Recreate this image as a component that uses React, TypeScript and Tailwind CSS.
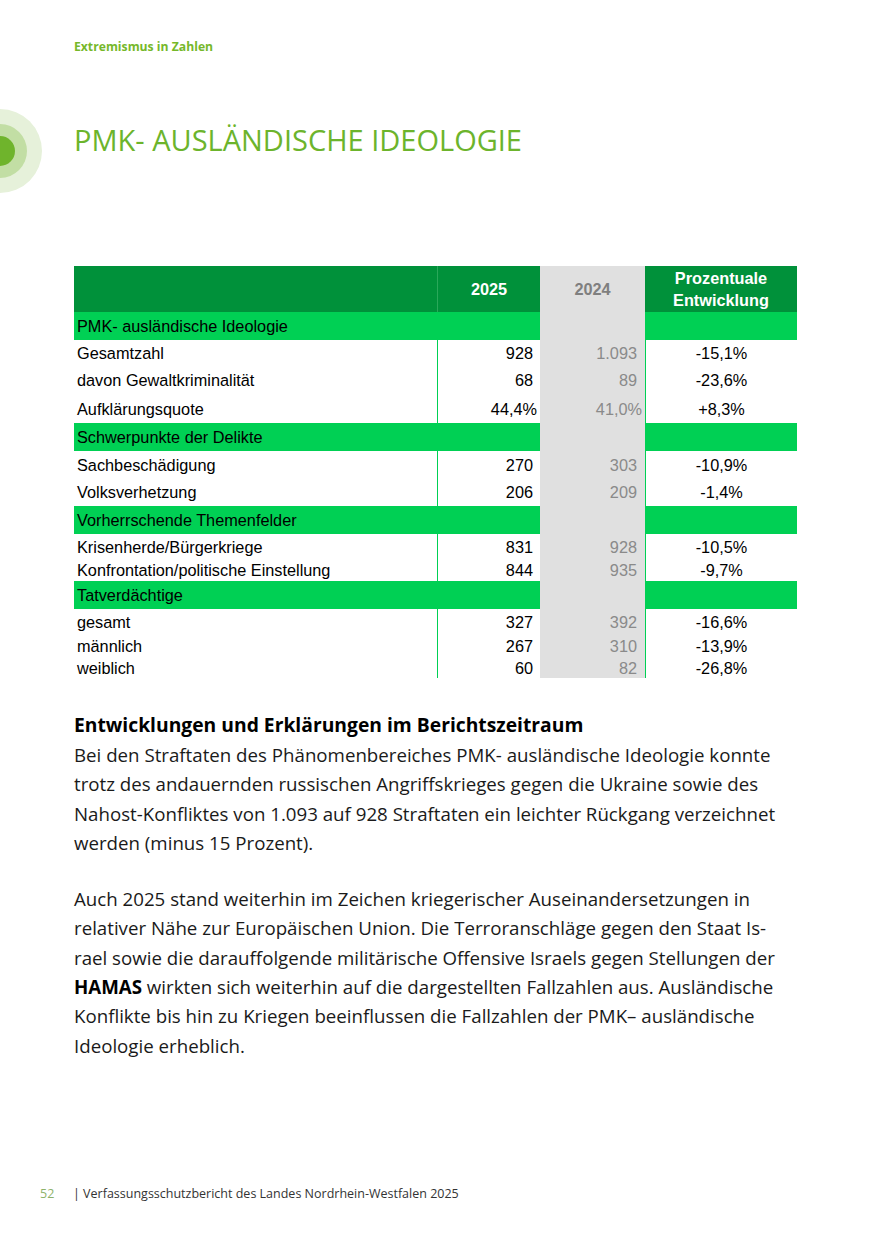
import React from 'react';

type Row =
  | { kind: 'section'; label: string }
  | { kind: 'data'; label: string; y25: string; y24: string; change: string; h: number; pct?: boolean };

const rows: Row[] = [
  { kind: 'section', label: 'PMK- ausländische Ideologie' },
  { kind: 'data', label: 'Gesamtzahl', y25: '928', y24: '1.093', change: '-15,1%', h: 26 },
  { kind: 'data', label: 'davon Gewaltkriminalität', y25: '68', y24: '89', change: '-23,6%', h: 28 },
  { kind: 'data', label: 'Aufklärungsquote', y25: '44,4%', y24: '41,0%', change: '+8,3%', h: 29, pct: true },
  { kind: 'section', label: 'Schwerpunkte der Delikte' },
  { kind: 'data', label: 'Sachbeschädigung', y25: '270', y24: '303', change: '-10,9%', h: 27 },
  { kind: 'data', label: 'Volksverhetzung', y25: '206', y24: '209', change: '-1,4%', h: 28 },
  { kind: 'section', label: 'Vorherrschende Themenfelder' },
  { kind: 'data', label: 'Krisenherde/Bürgerkriege', y25: '831', y24: '928', change: '-10,5%', h: 25 },
  { kind: 'data', label: 'Konfrontation/politische Einstellung', y25: '844', y24: '935', change: '-9,7%', h: 22 },
  { kind: 'section', label: 'Tatverdächtige' },
  { kind: 'data', label: 'gesamt', y25: '327', y24: '392', change: '-16,6%', h: 26 },
  { kind: 'data', label: 'männlich', y25: '267', y24: '310', change: '-13,9%', h: 22 },
  { kind: 'data', label: 'weiblich', y25: '60', y24: '82', change: '-26,8%', h: 21 },
];

const StatsTable: React.FC = () => (
  <div className="w-[723px] font-['Liberation_Sans',Arial,sans-serif] text-[16.3px] leading-[20px] text-black">
    <div className="grid grid-cols-[363px_103px_105px_152px] h-[46px]">
      <div className="bg-[#00913a]" />
      <div className="bg-[#00913a] border-l border-[#2aa85a] flex items-center justify-center font-bold text-white">2025</div>
      <div className="bg-[#e0e0e0] flex items-center justify-center font-bold text-[#7f7f7f]">2024</div>
      <div className="bg-[#00913a] flex items-center justify-center text-center font-bold text-white leading-[22px]">
        Prozentuale
        <br />
        Entwicklung
      </div>
    </div>
    {rows.map((row, i) =>
      row.kind === 'section' ? (
        <div key={i} className="grid grid-cols-[466px_105px_152px] h-[28px]">
          <div className="bg-[#00d054] flex items-center pl-[3px]">{row.label}</div>
          <div className="bg-[#e0e0e0]" />
          <div className="bg-[#00d054]" />
        </div>
      ) : (
        <div key={i} className="grid grid-cols-[363px_103px_105px_152px]" style={{ height: row.h }}>
          <div className="flex items-center pl-[3px]">{row.label}</div>
          <div className={`border-l border-[#00d054] flex items-center justify-end ${row.pct ? 'pr-[3px]' : 'pr-[7px]'}`}>{row.y25}</div>
          <div className={`bg-[#e0e0e0] flex items-center justify-end text-[#8a8a8a] ${row.pct ? 'pr-[3px]' : 'pr-[8px]'}`}>{row.y24}</div>
          <div className="border-l border-[#00d054] flex items-center justify-center">{row.change}</div>
        </div>
      )
    )}
  </div>
);

export default function App() {
  return (
    <div className="w-[875px] h-[1241px] bg-white font-['Open_Sans',sans-serif] text-[#1a1a1a] flex flex-col">
      <div className="pl-[74px] pt-[38px] text-[12.2px] font-bold text-[#76b82a] leading-[18px]">Extremismus in Zahlen</div>

      <div className="flex items-start mt-[52px]">
        <svg width="42" height="86" viewBox="0 0 42 86" className="shrink-0">
          <circle cx="0" cy="43" r="42" fill="#e6f1da" />
          <circle cx="0" cy="43" r="27" fill="#c2dea4" />
          <circle cx="0" cy="43" r="15" fill="#6fb42c" />
        </svg>
        <h1 className="ml-[32px] mt-[13px] text-[29px] leading-[38px] text-[#6cb42c] font-normal">
          PMK- AUSLÄNDISCHE IDEOLOGIE
        </h1>
      </div>

      <div className="pl-[74px] mt-[72px]">
        <StatsTable />
      </div>

      <div className="pl-[74px] pr-[40px] mt-[32px] text-[18.7px] leading-[29.3px] whitespace-nowrap">
        <h2 className="font-bold text-black text-[19.3px] leading-[30px]">Entwicklungen und Erklärungen im Berichtszeitraum</h2>
        <p>
          Bei den Straftaten des Phänomenbereiches PMK- ausländische Ideologie konnte
          <br />
          trotz des andauernden russischen Angriffskrieges gegen die Ukraine sowie des
          <br />
          Nahost-Konfliktes von 1.093 auf 928 Straftaten ein leichter Rückgang verzeichnet
          <br />
          werden (minus 15 Prozent).
        </p>
        <p className="mt-[27px]">
          Auch 2025 stand weiterhin im Zeichen kriegerischer Auseinandersetzungen in
          <br />
          relativer Nähe zur Europäischen Union. Die Terroranschläge gegen den Staat Is-
          <br />
          rael sowie die darauffolgende militärische Offensive Israels gegen Stellungen der
          <br />
          <strong className="font-bold text-black">HAMAS</strong> wirkten sich weiterhin auf die dargestellten Fallzahlen aus. Ausländische
          <br />
          Konflikte bis hin zu Kriegen beeinflussen die Fallzahlen der PMK– ausländische
          <br />
          Ideologie erheblich.
        </p>
      </div>

      <div className="mt-auto mb-[38px] flex items-center text-[12.5px] leading-[18px]">
        <span className="ml-[40px] w-[33px] text-[#8db26a]">52</span>
        <span className="text-[#333]">| Verfassungsschutzbericht des Landes Nordrhein-Westfalen 2025</span>
      </div>
    </div>
  );
}
